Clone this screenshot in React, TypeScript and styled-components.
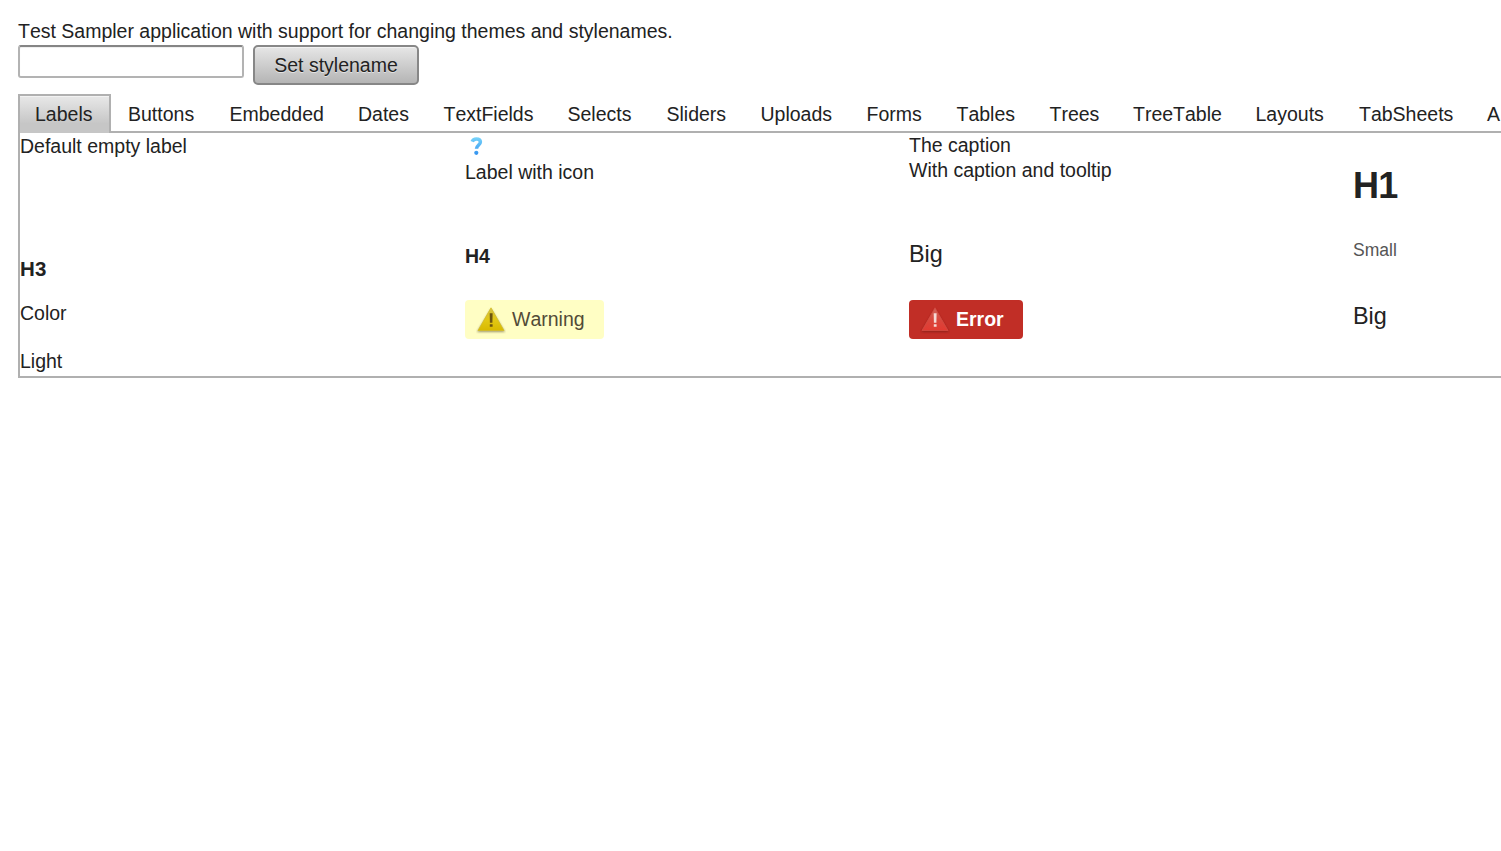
import React from 'react';
import styled, { createGlobalStyle } from 'styled-components';

const GlobalStyle = createGlobalStyle`
  body {
    margin: 0;
    background: #fff;
    color: #222;
    font-family: "Liberation Sans", Arial, sans-serif;
    font-size: 19.5px;
    font-kerning: none;
    line-height: 26px;
  }
`;

const Page = styled.main`
  display: flex;
  flex-direction: column;
  padding: 18px 0 0 18px;
`;

const Intro = styled.div`
  height: 27px;
  white-space: nowrap;
`;

const Controls = styled.div`
  display: flex;
  align-items: flex-start;
  gap: 9px;
  height: 49px;
`;

const StyleInput = styled.input`
  box-sizing: border-box;
  width: 226px;
  height: 33px;
  border: 2px solid #b3b3b3;
  border-top-color: #858585;
  border-radius: 3px;
  background: #fff;
  box-shadow: inset 0 1px 1px #eee;
  outline: none;
`;

const Button = styled.button`
  box-sizing: border-box;
  width: 166px;
  height: 40px;
  padding: 0 0 1px;
  border: 2px solid #878787;
  border-radius: 5px;
  background: linear-gradient(#e6e6e6, #b5b5b5);
  box-shadow: inset 0 1px 0 #f2f2f2;
  color: #222;
  font: inherit;
  font-kerning: none;
  text-shadow: 0 1px 0 #e3e3e3;
`;

const TabBar = styled.nav`
  display: flex;
  height: 37px;
`;

const Tab = styled.div<{ $width: number; $active?: boolean }>`
  box-sizing: border-box;
  flex: none;
  width: ${(p) => p.$width}px;
  height: ${(p) => (p.$active ? 39 : 37)}px;
  padding: ${(p) => (p.$active ? '5px 0 0 15px' : '7px 0 0 17px')};
  border: ${(p) => (p.$active ? '2px solid #b0b0b0' : '0')};
  border-bottom: 0;
  background: ${(p) => (p.$active ? 'linear-gradient(#e8e8e8, #c6c6c6 75%)' : 'none')};
  box-shadow: ${(p) => (p.$active ? 'inset 0 1px 0 #f2f2f2' : 'none')};
  position: relative;
  z-index: 1;
  white-space: nowrap;
`;

const Panel = styled.section`
  display: grid;
  box-sizing: border-box;
  height: 247px;
  grid-template-columns: 445px 444px 444px minmax(0, 1fr);
  grid-template-rows: 106px 61px 48px 28px;
  border: 2px solid #b0b0b0;
  border-right: 0;
`;

const Cell = styled.div<{ $top?: number }>`
  margin-top: ${(p) => p.$top ?? 0}px;
  white-space: nowrap;
`;

const Caption = styled.div`
  height: 25px;
`;

const IconCaption = styled.div`
  height: 26px;

  svg {
    display: block;
  }
`;

const Heading = styled.div<{ $size: number; $spacing?: number }>`
  font-size: ${(p) => p.$size}px;
  font-weight: bold;
  letter-spacing: ${(p) => p.$spacing ?? 0}px;
`;

const Big = styled.div`
  font-size: 23.4px;
`;

const Small = styled.div`
  color: #555;
  font-size: 17.55px;
`;

const Notice = styled.div<{ $error?: boolean }>`
  display: flex;
  box-sizing: border-box;
  width: ${(p) => (p.$error ? 114 : 139)}px;
  height: 39px;
  padding: 6px 0 0 11px;
  gap: 6px;
  border-radius: 4px;
  background: ${(p) => (p.$error ? '#c12e26' : '#fffec4')};
  color: ${(p) => (p.$error ? '#fff' : '#524b37')};
  font-weight: ${(p) => (p.$error ? 'bold' : 'normal')};
`;

const HelpIcon = () => (
  <svg width="24" height="26" viewBox="0 0 24 26">
    <defs>
      <linearGradient id="help" x1="0" y1="4" x2="0" y2="22" gradientUnits="userSpaceOnUse">
        <stop stopColor="#79d5fa" />
        <stop offset="1" stopColor="#3191ef" />
      </linearGradient>
    </defs>
    <path d="M7.2 8.6c.6-1.8 2.1-2.7 4.2-2.7 2.5 0 4 1.2 4 3.1 0 2.8-3.9 3.2-3.9 6.8" fill="none" stroke="url(#help)" strokeWidth="3.5" />
    <circle cx="11.3" cy="19.8" r="2.1" fill="url(#help)" />
  </svg>
);

const AlertIcon = ({ error }: { error?: boolean }) => {
  const id = error ? 'alert-red' : 'alert-yellow';
  return (
    <svg width="30" height="28" viewBox="0 0 30 28">
      <defs>
        <linearGradient id={id} x1="0" y1="0" x2="0" y2="1">
          <stop stopColor={error ? '#d0635a' : '#d3bf48'} />
          <stop offset="0.55" stopColor={error ? '#d9463c' : '#e2c814'} />
          <stop offset="1" stopColor={error ? '#e23a31' : '#d8b900'} />
        </linearGradient>
        <filter id={`${id}-shadow`} x="-20%" y="-20%" width="140%" height="150%">
          <feGaussianBlur stdDeviation="0.9" />
        </filter>
      </defs>
      <path d="M15 3 29 26H1Z" fill={error ? '#7d1a16' : '#78704a'} opacity=".7" filter={`url(#${id}-shadow)`} />
      <path d="M15 1.8 28 24.5H2Z" fill={`url(#${id})`} stroke={error ? '#d34c42' : '#d4be28'} strokeWidth=".8" strokeLinejoin="round" />
      <path d="M13.7 7.2h2.9l-.2 9.6h-2.5ZM13.8 18.2h2.8v2.6h-2.8Z" fill={error ? '#f6dad6' : '#6b5411'} />
    </svg>
  );
};

const tabs: [string, number][] = [
  ['Labels', 93], ['Buttons', 101.5], ['Embedded', 128.5], ['Dates', 85.5],
  ['TextFields', 124], ['Selects', 99], ['Sliders', 94], ['Uploads', 106],
  ['Forms', 90], ['Tables', 93], ['Trees', 83.5], ['TreeTable', 122.5],
  ['Layouts', 103.5], ['TabSheets', 128], ['A', 31],
];

export default function App() {
  return (
    <>
      <GlobalStyle />
      <Page>
        <Intro>Test Sampler application with support for changing themes and stylenames.</Intro>
        <Controls>
          <StyleInput aria-label="Stylename" />
          <Button>Set stylename</Button>
        </Controls>
        <TabBar>
          {tabs.map(([name, width], i) => (
            <Tab key={name} $width={width} $active={i === 0}>{name}</Tab>
          ))}
        </TabBar>
        <Panel>
          <Cell>Default empty label</Cell>
          <Cell>
            <IconCaption><HelpIcon /></IconCaption>
            Label with icon
          </Cell>
          <Cell $top={-1}>
            <Caption>The caption</Caption>
            With caption and tooltip
          </Cell>
          <Cell $top={40}><Heading $size={36} $spacing={-0.7}>H1</Heading></Cell>
          <Cell $top={17}><Heading $size={20.5} $spacing={0.3}>H3</Heading></Cell>
          <Cell $top={4}><Heading $size={19.5}>H4</Heading></Cell>
          <Cell $top={2}><Big>Big</Big></Cell>
          <Cell $top={-2}><Small>Small</Small></Cell>
          <Cell>Color</Cell>
          <Cell><Notice><AlertIcon />Warning</Notice></Cell>
          <Cell><Notice $error><AlertIcon error />Error</Notice></Cell>
          <Cell $top={3}><Big>Big</Big></Cell>
          <Cell>Light</Cell>
        </Panel>
      </Page>
    </>
  );
}
